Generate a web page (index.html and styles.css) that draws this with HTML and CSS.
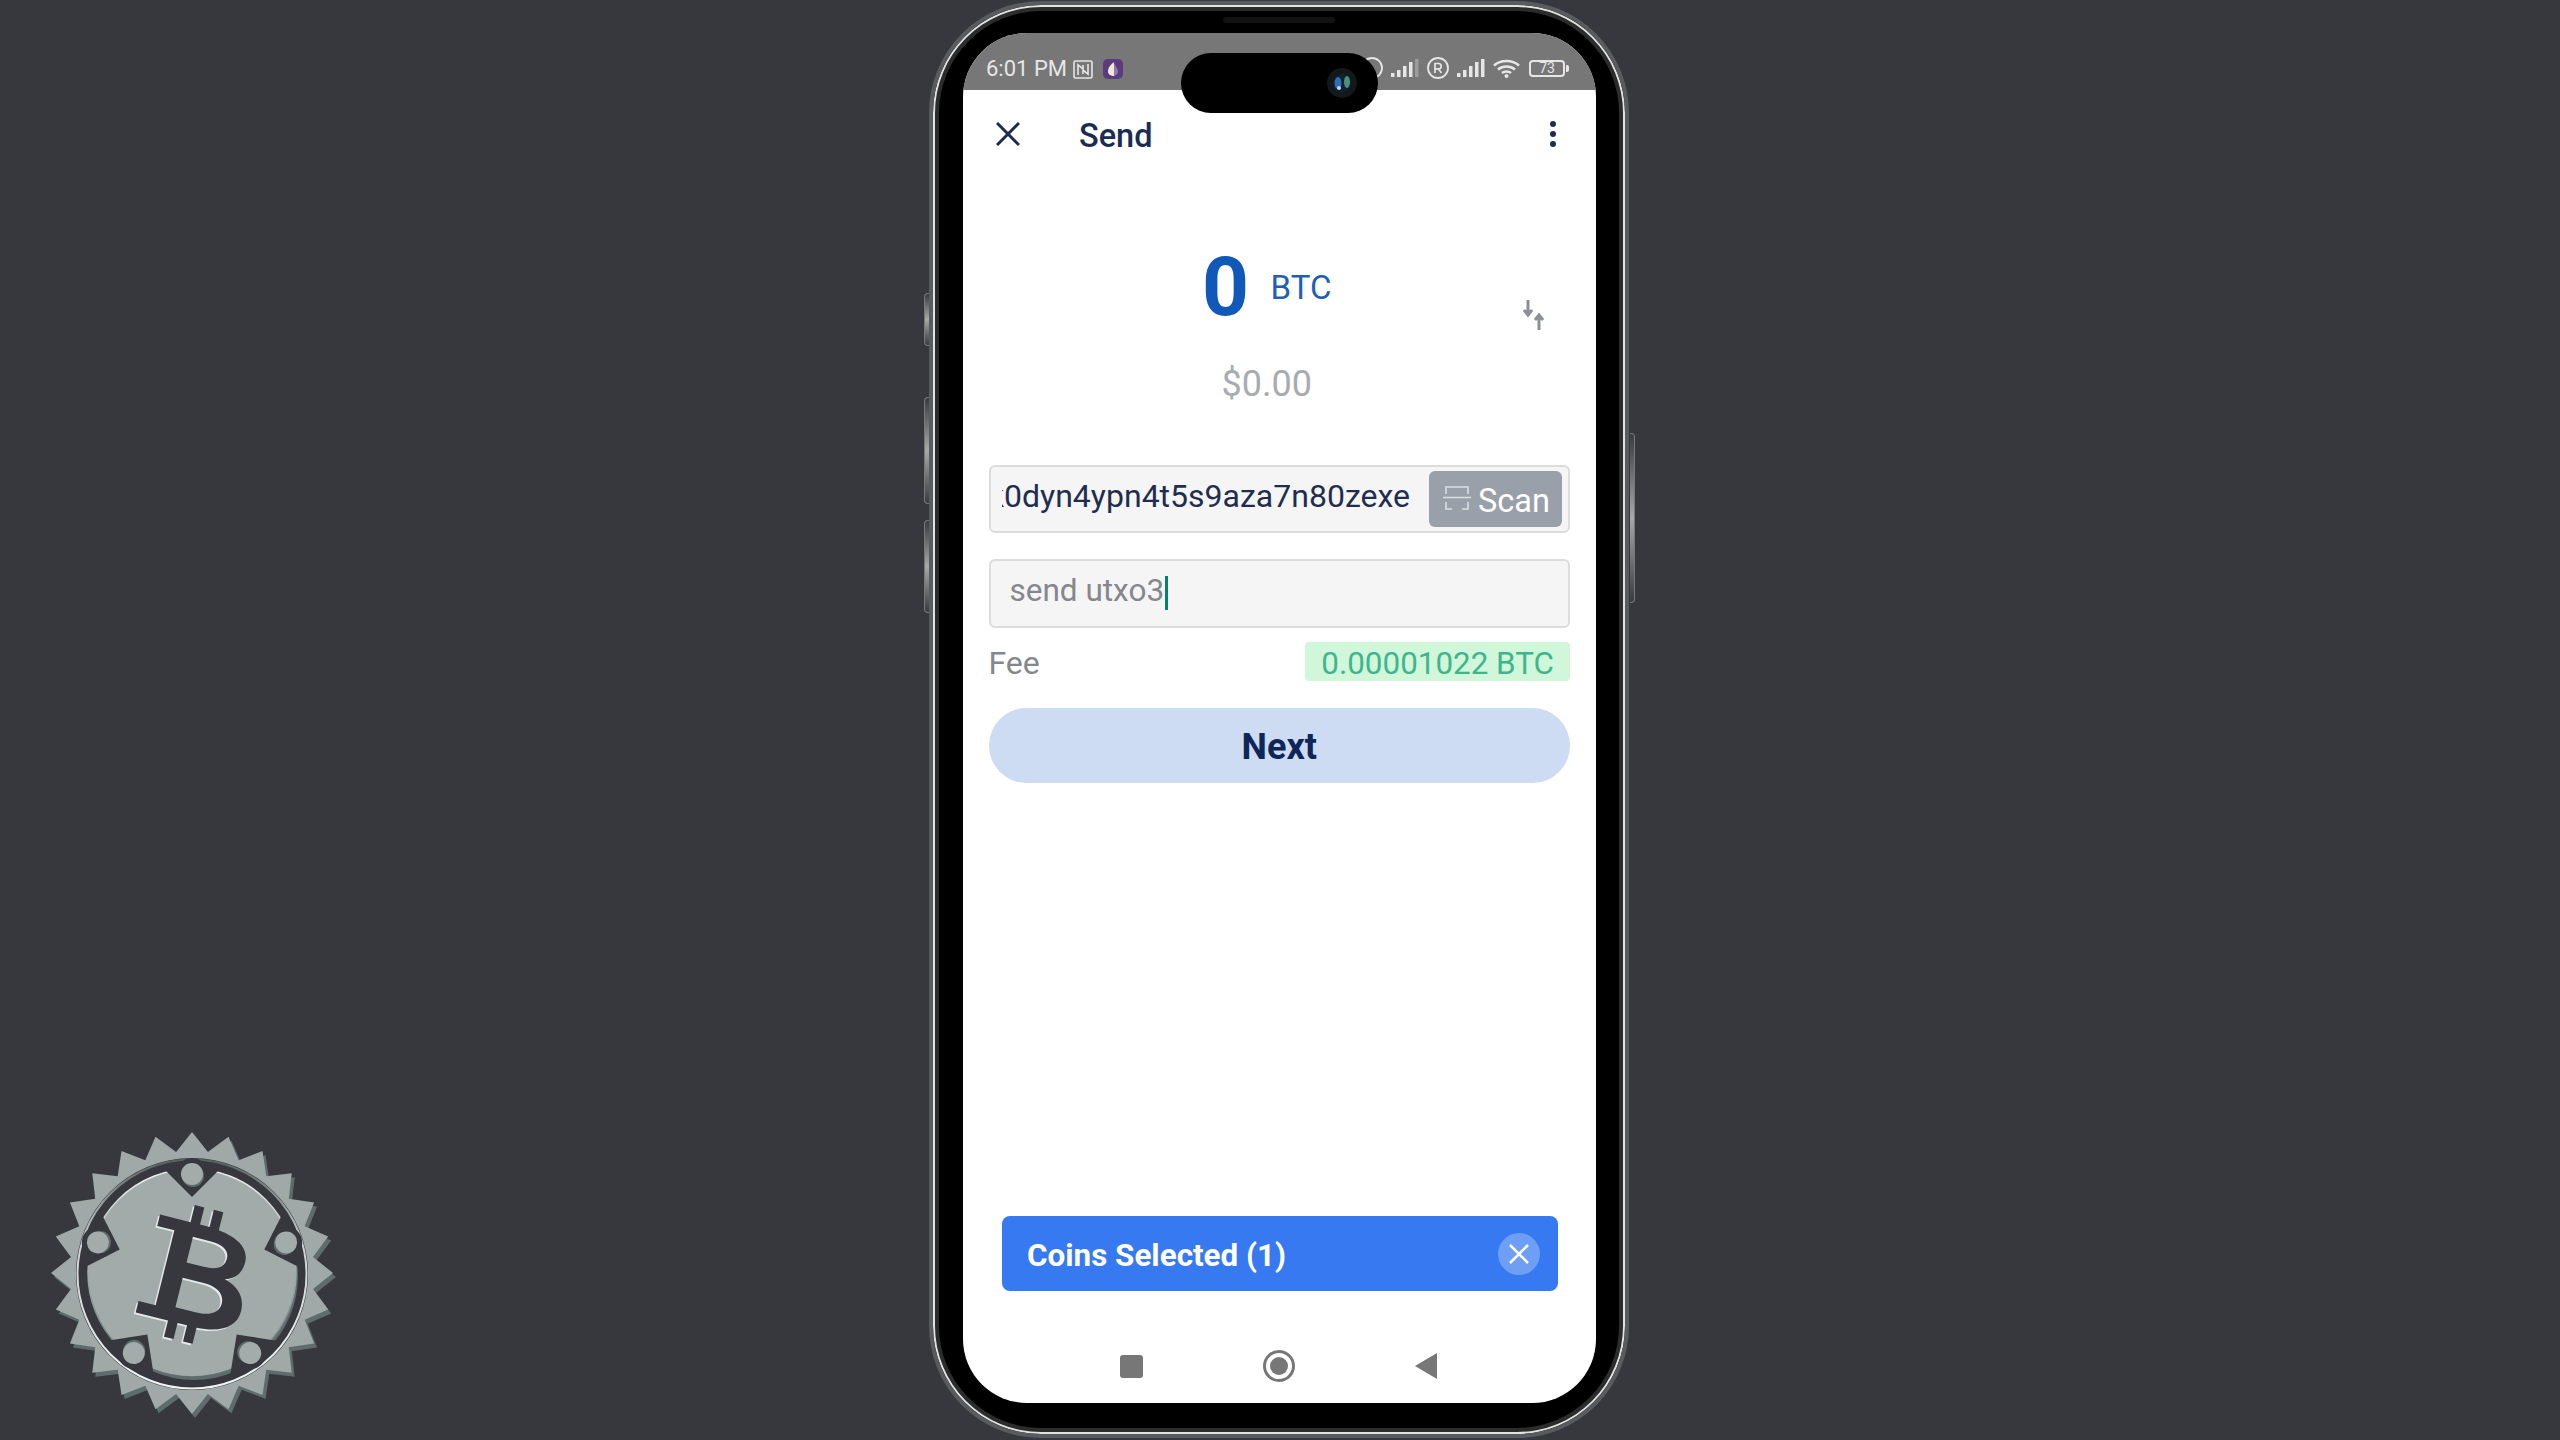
FILE: index.html
```html
<!DOCTYPE html>
<html lang="en">
<head>
    <meta charset="UTF-8">
    <title>Send</title>
    <link rel="stylesheet" href="styles.css">
</head>
<body>
    <div class="stage">
        <div class="phone">
            <span class="side-btn side-silent"></span>
            <span class="side-btn side-up"></span>
            <span class="side-btn side-down"></span>
            <span class="side-btn side-power"></span>
            <span class="speaker"></span>
            <div class="screen">
                <div class="island">
                    <svg class="camera" viewBox="0 0 30 30">
                        <circle cx="15" cy="15" r="15" fill="#14181b"/>
                        <circle cx="15" cy="15" r="9" fill="#0c2430"/>
                        <ellipse cx="11" cy="15" rx="3.5" ry="6" fill="#2f6fb0"/>
                        <ellipse cx="20" cy="14" rx="3" ry="6" fill="#4f8f78"/>
                        <circle cx="12" cy="20" r="2" fill="#c8d4e8"/>
                    </svg>
                </div>
                <div class="status-bar">
                    <div class="status-left">
                        <span class="status-time">6:01 PM</span>
                        <svg class="icon-nfc" viewBox="0 0 20 19" fill="none" stroke="#e6e6e6">
                            <rect x="1" y="1" width="18" height="17" rx="1.5" stroke-width="1.6"/>
                            <path d="M5 15V5l5 4v5M15 4v10l-5-4V5" stroke-width="1.6"/>
                        </svg>
                        <svg class="icon-tor" viewBox="0 0 20 20">
                            <rect width="20" height="20" rx="5" fill="#5b3a7d"/>
                            <path d="M11 3C6 7 5 10 5 12.500C5 15.500 8 17 11 17Z" fill="#efe9d8"/>
                            <path d="M11 4.500C13.500 8 15 10 15 12.500C15 15 13 16.500 11 17Z" fill="#8f79b5"/>
                        </svg>
                    </div>
                    <div class="status-right">
                        <svg class="icon-reg" viewBox="0 0 22 22" fill="none" stroke="#e6e6e6">
                            <circle cx="11" cy="11" r="10" stroke-width="1.800"/>
                        </svg>
                        <svg class="icon-signal" viewBox="0 0 28 18" fill="#e6e6e6">
                            <rect x="0" y="14" width="3.500" height="4"/>
                            <rect x="6" y="11" width="3.500" height="7"/>
                            <rect x="12" y="7" width="3.500" height="11"/>
                            <rect x="18" y="3" width="3.500" height="15"/>
                            <rect x="24" y="0" width="3.500" height="18" fill="#9c9c9c"/>
                        </svg>
                        <svg class="icon-reg" viewBox="0 0 22 22" fill="none" stroke="#e6e6e6">
                            <circle cx="11" cy="11" r="10" stroke-width="1.800"/>
                            <path d="M8 16V6.500h3.500a2.700 2.700 0 0 1 0 5.400H8M11.500 12l3 4" stroke-width="1.700"/>
                        </svg>
                        <svg class="icon-signal" viewBox="0 0 28 18" fill="#e6e6e6">
                            <rect x="0" y="14" width="3.500" height="4"/>
                            <rect x="6" y="11" width="3.500" height="7"/>
                            <rect x="12" y="7" width="3.500" height="11"/>
                            <rect x="18" y="3" width="3.500" height="15"/>
                            <rect x="24" y="0" width="3.500" height="18"/>
                        </svg>
                        <svg class="icon-wifi" viewBox="0 0 27 19" fill="none" stroke="#e6e6e6" stroke-width="2.700">
                            <path d="M1 6.500C8 .5 19 .5 26 6.500M5 10.500C10 6.500 17 6.500 22 10.500M9 14C11.500 12 15.500 12 18 14"/>
                            <circle cx="13.500" cy="17" r="2" fill="#e6e6e6" stroke="none"/>
                        </svg>
                        <div class="battery">
                            <span class="battery-body">73</span>
                            <span class="battery-nub"></span>
                        </div>
                    </div>
                </div>

                <div class="top-bar">
                    <svg class="icon-close" viewBox="0 0 24 24" fill="none" stroke="#1b2c52" stroke-width="3">
                        <path d="M1 1l22 22M23 1L1 23"/>
                    </svg>
                    <span class="top-title">Send</span>
                    <div class="menu-dots"><i></i><i></i><i></i></div>
                </div>

                <main class="content">
                    <div class="amount-row">
                        <div class="amount-main">
                            <div class="amount-line">
                                <span class="amount-value">0</span>
                                <span class="amount-unit">BTC</span>
                            </div>
                            <div class="amount-fiat">$0.00</div>
                        </div>
                        <svg class="icon-swap" viewBox="0 0 21 30" fill="none" stroke="#8b9097" stroke-width="3">
                            <path d="M5 0v14M1 10l4 5 4-5"/>
                            <path d="M16 30V15M12 20l4-5 4 5"/>
                        </svg>
                    </div>

                    <div class="field field-address">
                        <div class="address-clip"><span>k0dyn4ypn4t5s9aza7n80zexe</span></div>
                        <div class="scan-btn">
                            <svg class="icon-scan" viewBox="0 0 28 26" fill="none" stroke="#dcdee2" stroke-width="1.600">
                                <path d="M3 9V2h22v7M3 17v7h6M25 17v7h-6M0 12.500h28"/>
                            </svg>
                            <span>Scan</span>
                        </div>
                    </div>

                    <div class="field field-note">
                        <span class="note-text">send utxo3</span><span class="caret"></span>
                    </div>

                    <div class="fee-row">
                        <span class="fee-label">Fee</span>
                        <span class="fee-value">0.00001022 BTC</span>
                    </div>

                    <div class="next-btn">Next</div>

                    <div class="coins-bar">
                        <span>Coins Selected (1)</span>
                        <span class="coins-close">
                            <svg viewBox="0 0 20 20" fill="none" stroke="#fff" stroke-width="2.500">
                                <path d="M1 1l18 18M19 1L1 19"/>
                            </svg>
                        </span>
                    </div>
                </main>

                <div class="nav-bar">
                    <span class="nav-square"></span>
                    <span class="nav-circle"><i></i></span>
                    <span class="nav-back"></span>
                </div>
            </div>
        </div>

        <svg class="brand-logo" viewBox="-150 -150 300 300">
            <defs>
                <linearGradient id="ring-light" x1="0" y1="0" x2="0" y2="1">
                    <stop offset="0" stop-color="#56605f"/>
                    <stop offset="0.35" stop-color="#c9cfcf"/>
                    <stop offset="1" stop-color="#f2f5f5"/>
                </linearGradient>
                <linearGradient id="plate-edge" x1="0" y1="0" x2="0" y2="1">
                    <stop offset="0" stop-color="#f0f3f3"/>
                    <stop offset="0.5" stop-color="#a3abab"/>
                    <stop offset="1" stop-color="#5f6c6c"/>
                </linearGradient>
                <polygon id="gear" points="0,-141 15.900,-121 36.500,-136.200 46.700,-112.700 70.500,-122.100 74.300,-96.800 99.700,-99.700 96.800,-74.300 122.100,-70.500 112.700,-46.700 136.200,-36.500 121,-15.900 141,0 121,15.900 136.200,36.500 112.700,46.700 122.100,70.500 96.800,74.300 99.700,99.700 74.300,96.800 70.500,122.100 46.700,112.700 36.500,136.200 15.900,121 0,141 -15.900,121 -36.500,136.200 -46.700,112.700 -70.500,122.100 -74.300,96.800 -99.700,99.700 -96.800,74.300 -122.100,70.500 -112.700,46.700 -136.200,36.500 -121,15.900 -141,0 -121,-15.900 -136.200,-36.500 -112.700,-46.700 -122.100,-70.500 -96.800,-74.300 -99.700,-99.700 -74.300,-96.800 -70.500,-122.100 -46.700,-112.700 -36.500,-136.200 -15.900,-121"/>
                <path id="coin-b" fill-rule="evenodd" d="M-46 -50H-14V-68H-4V-50H6V-68H16V-49C40 -46 50 -36 50 -24C50 -12 44 -5 34 -2C50 2 58 12 58 26C58 42 44 52 18 53V70H8V53H-2V70H-12V53H-46V41H-28V-38H-46ZM-8 -36V-9H10C26 -9 31 -15 31 -23C31 -30 26 -36 10 -36ZM-8 7V38H14C30 38 37 31 37 23C37 14 30 7 14 7Z"/>
                <g id="rivet">
                    <path d="M-32 -108L0 -76L32 -108Z" fill="#36383d"/>
                    <circle cy="-99" r="16" fill="#36383d"/>
                    <circle cx="1" cy="-97" r="11" fill="#5f6c6c"/>
                    <circle cy="-99" r="11" fill="#a3abab"/>
                </g>
            </defs>
            <use href="#gear" x="3" y="4" fill="#5f6c6c"/>
            <use href="#gear" fill="#a0a8a8"/>
            <circle cy="1" r="116" fill="#36383d"/>
            <circle cy="1" r="114.500" fill="none" stroke="url(#ring-light)" stroke-width="2"/>
            <circle cx="2" cy="3" r="104" fill="#5f6c6c"/>
            <circle r="104" fill="#a2aaaa" stroke="url(#plate-edge)" stroke-width="1.500"/>
            <use href="#rivet"/>
            <use href="#rivet" transform="rotate(72)"/>
            <use href="#rivet" transform="rotate(144)"/>
            <use href="#rivet" transform="rotate(216)"/>
            <use href="#rivet" transform="rotate(288)"/>
            <g transform="rotate(14) scale(0.98)">
                <use href="#coin-b" x="-1.500" y="2" fill="#e4e8e8"/>
                <use href="#coin-b" fill="#36383d"/>
            </g>
        </svg>
    </div>
</body>
</html>
```

FILE: styles.css
```css
* {
    box-sizing: border-box;
}
html, body {
    margin: 0;
    padding: 0;
}
body {
    background: #36383d;
    font-family: Roboto, "Liberation Sans", sans-serif;
}
.stage {
    position: relative;
    width: 2560px;
    height: 1440px;
    overflow: hidden;
    display: flex;
    justify-content: center;
    padding-top: 1px;
}

/* phone frame */
.phone {
    position: relative;
    width: 700px;
    height: 1437px;
    margin-left: -2px;
    padding: 28px 0 0 30px;
    background: #000;
    border-radius: 112px;
    border: 4px solid #5a5b5e;
    box-shadow: inset 0 0 0 2px #e2e2e2, inset 0 0 0 6px #2c2c2c;
}
.side-btn {
    position: absolute;
    width: 5px;
    border: 1px solid #77787b;
    background: linear-gradient(to bottom, #3a3b3f, #a8a8a8 50%, #3a3b3f);
}
.side-silent { left: -9px; top: 288px; height: 53px; border-right: 0; border-radius: 4px 0 0 4px; }
.side-up { left: -9px; top: 392px; height: 107px; border-right: 0; border-radius: 4px 0 0 4px; }
.side-down { left: -9px; top: 515px; height: 93px; border-right: 0; border-radius: 4px 0 0 4px; }
.side-power { right: -10px; top: 428px; height: 170px; border-left: 0; border-radius: 0 4px 4px 0; }
.speaker {
    position: absolute;
    left: 290px;
    top: 12px;
    width: 112px;
    height: 6px;
    border-radius: 3px;
    background: #121212;
}
.screen {
    position: relative;
    width: 633px;
    height: 1370px;
    display: flex;
    flex-direction: column;
    background: #fff;
    border-radius: 64px;
    overflow: hidden;
}
.island {
    position: absolute;
    left: 218px;
    top: 20px;
    width: 197px;
    height: 60px;
    border-radius: 30px;
    background: #000;
    display: flex;
    justify-content: flex-end;
    align-items: center;
    padding-right: 21px;
}
.camera {
    width: 30px;
    height: 30px;
}

/* status bar */
.status-bar {
    height: 57px;
    flex-shrink: 0;
    background: #777;
    display: flex;
    justify-content: space-between;
    align-items: flex-end;
    padding: 0 27px 11px 23px;
}
.status-left {
    display: flex;
    align-items: center;
    gap: 6px;
}
.status-time {
    font-size: 22px;
    line-height: 20px;
    color: #e6e6e6;
}
.icon-nfc {
    width: 20px;
    height: 19px;
}
.icon-tor {
    width: 20px;
    height: 20px;
    margin-left: 4px;
}
.status-right {
    display: flex;
    align-items: center;
    gap: 8px;
}
.icon-signal {
    width: 28px;
    height: 18px;
}
.icon-reg {
    width: 22px;
    height: 22px;
}
.icon-wifi {
    width: 27px;
    height: 19px;
}
.battery {
    display: flex;
    align-items: center;
    gap: 1px;
    margin-left: 1px;
}
.battery-body {
    width: 36px;
    height: 17px;
    border: 2px solid #e6e6e6;
    border-radius: 4px;
    font-size: 14px;
    line-height: 13px;
    text-align: center;
    color: #e6e6e6;
}
.battery-nub {
    width: 3px;
    height: 7px;
    background: #e6e6e6;
    border-radius: 0 2px 2px 0;
}

/* top bar */
.top-bar {
    height: 90px;
    flex-shrink: 0;
    display: flex;
    align-items: center;
    padding: 0 40px 0 33px;
}
.icon-close {
    width: 24px;
    height: 24px;
    margin-top: -2px;
}
.top-title {
    margin-left: 59px;
    font-size: 32.500px;
    font-weight: 500;
    color: #1b2c52;
    flex: 1;
    padding-top: 2px;
}
.menu-dots {
    display: flex;
    flex-direction: column;
    gap: 4px;
    margin-top: -2px;
}
.menu-dots i {
    width: 6px;
    height: 6px;
    border-radius: 50%;
    background: #1b2c52;
}

/* main form */
.content {
    flex: 1;
    display: flex;
    flex-direction: column;
    padding: 67px 26px 0 25.500px;
}
.amount-row {
    display: flex;
}
.amount-main {
    flex: 1;
    padding-left: 22px;
    text-align: center;
}
.amount-line {
    height: 80px;
    display: flex;
    justify-content: center;
    align-items: center;
    gap: 21.500px;
}
.amount-value {
    font-size: 82px;
    line-height: 80px;
    font-weight: 700;
    color: #1159b8;
}
.amount-unit {
    font-size: 33px;
    color: #1e5fb5;
}
.amount-fiat {
    margin-top: 35px;
    font-size: 36px;
    line-height: 44px;
    color: #a8abb0;
}
.icon-swap {
    width: 21px;
    height: 30px;
    margin: 53px 26px 0 0;
}
.field {
    display: flex;
    align-items: center;
    background: #f5f5f5;
    border: 2px solid #dcdcdc;
    border-radius: 6px;
}
.field-address {
    height: 68px;
    margin-top: 59px;
    padding: 0 6px 0 11px;
}
.address-clip {
    flex: 1;
    min-width: 0;
    overflow: hidden;
    display: flex;
    justify-content: flex-end;
    padding-right: 19px;
    font-size: 32px;
    color: #1f2d50;
    white-space: nowrap;
    margin-top: -6px;
}
.scan-btn {
    width: 133px;
    height: 56px;
    display: flex;
    align-items: center;
    justify-content: center;
    gap: 7px;
    background: #9aa0a9;
    border-radius: 6px;
    font-size: 32.500px;
    color: #fff;
    flex-shrink: 0;
    padding: 4px 0 0 2px;
}
.icon-scan {
    width: 28px;
    height: 26px;
    margin-top: -6px;
}
.field-note {
    height: 69px;
    margin-top: 26px;
    padding: 0 0 0 19px;
}
.note-text {
    font-size: 31.500px;
    color: #85878c;
    margin-top: -6px;
}
.caret {
    width: 3px;
    height: 34px;
    margin-left: 1px;
    background: #0c7f6b;
    margin-top: -2px;
}
.fee-row {
    height: 39px;
    margin-top: 14px;
    display: flex;
    justify-content: space-between;
    align-items: center;
}
.fee-label {
    font-size: 32px;
    color: #85878c;
    padding-top: 2px;
}
.fee-value {
    height: 39px;
    padding: 3px 16px 0;
    display: flex;
    align-items: center;
    background: #d0f7d9;
    border-radius: 4px;
    font-size: 31.400px;
    color: #3fb58e;
}
.next-btn {
    height: 75px;
    margin-top: 27px;
    padding-top: 2px;
    display: flex;
    align-items: center;
    justify-content: center;
    background: #cddbf3;
    border-radius: 38px;
    font-size: 36px;
    font-weight: 700;
    color: #0f2658;
}
.coins-bar {
    height: 75px;
    margin: auto 12px 0 13.500px;
    display: flex;
    justify-content: space-between;
    align-items: center;
    padding: 0 18px 0 25px;
    background: #3779f0;
    border-radius: 8px;
    font-size: 31.400px;
    font-weight: 700;
    color: #fff;
}
.coins-bar > span:first-child {
    padding-top: 4px;
}
.coins-close {
    width: 42px;
    height: 42px;
    display: flex;
    align-items: center;
    justify-content: center;
    background: #6f9ff5;
    border-radius: 50%;
}
.coins-close svg {
    width: 20px;
    height: 20px;
}

/* android nav */
.nav-bar {
    height: 112px;
    flex-shrink: 0;
    display: flex;
    justify-content: center;
    align-items: center;
    gap: 120px;
    padding: 38px 3px 0 0;
}
.nav-square {
    width: 23px;
    height: 23px;
    background: #777;
    border-radius: 3px;
}
.nav-circle {
    width: 32px;
    height: 32px;
    display: flex;
    align-items: center;
    justify-content: center;
    border: 3px solid #777;
    border-radius: 50%;
}
.nav-circle i {
    width: 18px;
    height: 18px;
    background: #777;
    border-radius: 50%;
}
.nav-back {
    width: 0;
    height: 0;
    border-style: solid;
    border-width: 13px 22px 13px 0;
    border-color: transparent #777 transparent transparent;
}

/* logo in the corner, over the video */
.brand-logo {
    position: absolute;
    left: 42px;
    top: 1123px;
    width: 300px;
    height: 300px;
}
```
